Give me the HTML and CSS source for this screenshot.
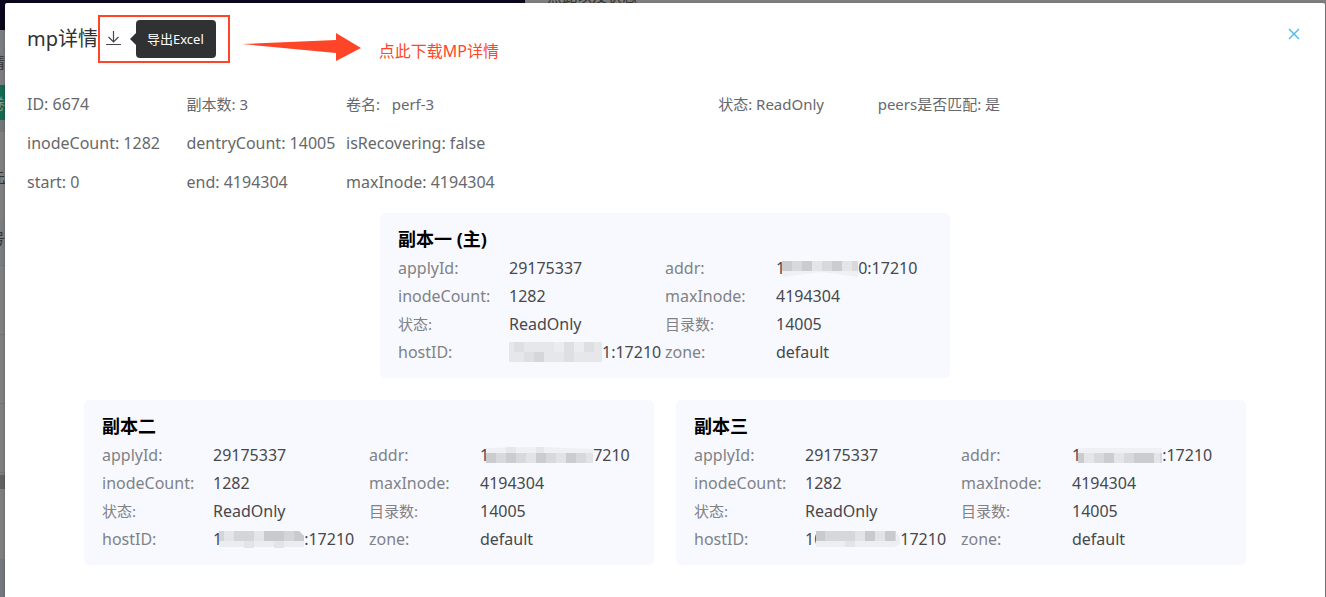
FILE: index.html
```html
<!DOCTYPE html>
<html lang="zh-CN">
<head>
<meta charset="utf-8">
<title>mp详情</title>
<link rel="stylesheet" href="styles.css">
</head>
<body>
<div class="page" aria-hidden="true">
  <div class="topbar"><div class="topbar-dark"></div><span class="topbar-text">点此以及状态</span></div>
  <div class="rail">
    <div class="rail-tab">情</div>
    <div class="rail-active">卷</div>
    <div class="rail-gap"></div>
    <div class="rail-link">先</div>
    <div class="rail-head">号</div>
    <div class="rail-row"></div>
    <div class="rail-row"></div>
    <div class="rail-row"></div>
    <div class="rail-scroll"></div>
    <div class="rail-foot"></div>
  </div>
</div>
<main class="dialog" role="dialog" aria-labelledby="title">
  <header class="head">
    <h1 class="title" id="title">mp详情</h1>
    <div class="export">
      <button class="icon-btn" type="button" aria-label="导出Excel">
        <svg width="16" height="16" viewBox="0 0 16 16" fill="none" stroke="#44474c" stroke-width="1.2"><path d="M7.500 0v11M2.500 6l5 5 5-5M0 13.500h15"/></svg>
      </button>
      <span class="tooltip" role="tooltip">导出Excel</span>
    </div>
    <svg class="arrow" width="120" height="28" viewBox="0 0 120 28"><path d="M1 11L95 7V0l25 15-25 13v-8z" fill="#ff4528"/></svg>
    <span class="note">点此下载MP详情</span>
    <button class="icon-btn close" type="button" aria-label="关闭">
      <svg width="12" height="12" viewBox="0 0 12 12" stroke="#42b8f0" stroke-width="1.300"><path d="M1 1l10 10M11 1L1 11"/></svg>
    </button>
  </header>

  <section class="summary">
    <span>ID: 6674</span>
    <span class="zh">副本数: 3</span>
    <span class="zh wide">卷名: &nbsp; perf-3</span>
    <span class="zh">状态: ReadOnly</span>
    <span class="zh last">peers是否匹配: 是</span>
    <span>inodeCount: 1282</span>
    <span>dentryCount: 14005</span>
    <span class="rest">isRecovering: false</span>
    <span>start: 0</span>
    <span>end: 4194304</span>
    <span class="rest">maxInode: 4194304</span>
  </section>

  <section class="replicas">
    <article class="card">
      <h2 class="card-title">副本一 (主)</h2>
      <dl class="fields">
        <dt>applyId:</dt><dd>29175337</dd>
        <dt>addr:</dt><dd>1<svg class="mask" width="76" height="18"><path fill="#cbccd0" d="M0 2h10v10H0zM20 2h10v10H20zM50 2h10v10H50z"/><path fill="#d8d9dd" d="M10 2h10v10H10zM40 2h10v10H40zM70 2h6v10h-6z"/><path fill="#e4e5e9" d="M30 2h10v10H30zM60 2h10v10H60z"/><path fill="#eff0f4" d="M0 12h76v6L40 13 0 18z"/></svg>0:17210</dd>
        <dt>inodeCount:</dt><dd>1282</dd>
        <dt>maxInode:</dt><dd>4194304</dd>
        <dt class="zh">状态:</dt><dd>ReadOnly</dd>
        <dt class="zh">目录数:</dt><dd>14005</dd>
        <dt>hostID:</dt><dd><svg class="mask flush" width="93" height="20"><path fill="#e6e7ea" d="M0 0h93v20H0z"/><path fill="#dedfe2" d="M5 0h10v10H5zM15 10h10v10H15zM55 0h10v20H55zM75 0h10v10H75z"/><path fill="#d5d6da" d="M25 10h10v10H25z"/><path fill="#ebecef" d="M45 0h10v10H45zM65 0h10v10H65z"/></svg>1:17210</dd>
        <dt>zone:</dt><dd>default</dd>
      </dl>
    </article>
    <div class="pair">
      <article class="card">
        <h2 class="card-title">副本二</h2>
        <dl class="fields">
          <dt>applyId:</dt><dd>29175337</dd>
          <dt>addr:</dt><dd>1<svg class="mask" width="107" height="16"><path fill="#eff0f3" d="M0 1l55-1 52 2v4H0z"/><path fill="#e6e7ea" d="M20 0h10v6H20zM50 0h8v6h-8z"/><path fill="#d8d9dc" d="M0 6h107v10H0z"/><path fill="#cbccd0" d="M0 6h10v10H0zM20 6h10v10H20zM50 6h10v10H50zM80 6h10v10H80z"/><path fill="#e2e3e7" d="M40 6h10v10H40zM70 6h10v10H70zM100 6h7v10h-7z"/></svg>7210</dd>
          <dt>inodeCount:</dt><dd>1282</dd>
          <dt>maxInode:</dt><dd>4194304</dd>
          <dt class="zh">状态:</dt><dd>ReadOnly</dd>
          <dt class="zh">目录数:</dt><dd>14005</dd>
          <dt>hostID:</dt><dd>1<svg class="mask" width="85" height="18"><path fill="#d4d5d9" d="M0 1h80l5 5v5H0z"/><path fill="#e4e5e9" d="M5 1h10v10H5zM35 1h10v10H35z"/><path fill="#c9cace" d="M45 1h20v10H45zM75 1h5l5 5v5H75z"/><path fill="#ebecf0" d="M0 11h85v6H0z"/><path fill="#e3e4e8" d="M25 11h10v7H25zM55 11h10v7H55z"/></svg>:17210</dd>
          <dt>zone:</dt><dd>default</dd>
        </dl>
      </article>
      <article class="card">
        <h2 class="card-title">副本三</h2>
        <dl class="fields">
          <dt>applyId:</dt><dd>29175337</dd>
          <dt>addr:</dt><dd>1<svg class="mask" width="84" height="16"><path fill="#eff0f3" d="M0 1h84v5H0z"/><path fill="#d8d9dc" d="M0 6h84v10H0z"/><path fill="#cbccd0" d="M0 6h6v10H0zM26 6h10v10H26zM56 6h20v10H56z"/><path fill="#e4e5e9" d="M6 6h10v10H6zM36 6h10v10H36zM76 6h6v10h-6z"/></svg>:17210</dd>
          <dt>inodeCount:</dt><dd>1282</dd>
          <dt>maxInode:</dt><dd>4194304</dd>
          <dt class="zh">状态:</dt><dd>ReadOnly</dd>
          <dt class="zh">目录数:</dt><dd>14005</dd>
          <dt>hostID:</dt><dd>10<svg class="mask deep" width="84" height="18"><path fill="#d6d7db" d="M0 1h80v10H0z"/><path fill="#c9cace" d="M0 1h9v10H0zM49 1h10v10H49zM69 1h10v10H69z"/><path fill="#e2e3e6" d="M39 1h10v10H39zM59 1h10v10H59z"/><path fill="#edeef2" d="M0 11h84v3l-6 3H0zM80 3l4 4v5h-4z"/><path fill="#e3e4e8" d="M29 11h10v6H29z"/></svg>17210</dd>
          <dt>zone:</dt><dd>default</dd>
        </dl>
      </article>
    </div>
  </section>
</main>
</body>
</html>
```
FILE: styles.css
```css
* { box-sizing: border-box; }

body {
  margin: 0;
  min-height: 100vh;
  display: grid;
  background: #7f7f7f;
  font: 16px/24px "Noto Sans", "Noto Sans CJK SC", sans-serif;
  color: #66686c;
  overflow: hidden;
}

/* Dimmed page behind the dialog */
.page {
  position: absolute;
  inset: 0;
  overflow: hidden;
  background: #7f7f7f;
  font-size: 15px;
  color: #333;
}

.topbar { display: flex; height: 30px; }
.topbar-dark { flex: 0 0 525px; background: #0d071e; }
.topbar-text { margin: -12px 0 0 22px; line-height: 16px; }

.rail { width: 12px; }
.rail > div { display: flex; align-items: center; justify-content: flex-end; width: 5px; }
.rail .rail-tab { height: 55px; padding-top: 8px; background: #7a7d82; }
.rail .rail-active { height: 35px; background: #14694f; color: #8a9a94; }
.rail .rail-gap { height: 12px; background: #74767a; }
.rail .rail-link { height: 88px; text-decoration: underline; }
.rail .rail-head { height: 46px; padding-bottom: 10px; background: #797c80; border-bottom: 1px solid #727478; }
.rail .rail-row { height: 69px; border-bottom: 1px solid #747474; }
.rail .rail-scroll { height: 14px; margin-top: 2px; background: #626262; }
.rail .rail-foot { height: 38px; margin-top: 70px; background: #74777d; }

.dialog {
  position: relative;
  margin: 3px 1px 0 5px;
  padding: 12px 22px 32px;
  background: #fff;
  border-radius: 2px 2px 0 0;
  box-shadow: 0 1px 3px rgba(0, 0, 0, .3);
}

.head { display: flex; align-items: center; height: 48px; }
.title { margin: 0; font-size: 20px; line-height: 28px; font-weight: 400; color: #303133; }

.export {
  display: flex;
  align-items: center;
  gap: 14px;
  height: 48px;
  padding: 0 12px 0 6px;
  border: 2px solid #ff4528;
}

.icon-btn { display: flex; padding: 0; border: 0; background: none; cursor: pointer; }
.close { margin-left: auto; margin-right: 3px; margin-bottom: 10px; }

.tooltip {
  position: relative;
  padding: 0 12px 0 11px;
  border-radius: 4px;
  background: #303133;
  color: #fff;
  font-size: 13px;
  line-height: 38px;
}
.tooltip::before {
  content: "";
  position: absolute;
  left: -6px;
  top: 13px;
  border: 6px solid transparent;
  border-left: 0;
  border-right-color: #303133;
}

.arrow { margin: 18px 0 0 11px; align-self: flex-start; }
.note { margin: 24px 0 0 18px; color: #ff4528; }

.summary {
  display: grid;
  grid-template-columns: repeat(24, 1fr);
  row-gap: 15px;
  margin-top: 29px;
  white-space: nowrap;
}
.summary > * { grid-column: span 3; }
.summary > .wide { grid-column: span 7; }
.summary > .last { grid-column: span 8; }
.summary > .rest { grid-column: span 18; }
.zh { font-size: 15px; }

.replicas { display: flex; flex-direction: column; align-items: center; gap: 22px; margin-top: 19px; }
.pair { display: flex; justify-content: center; gap: 22px; width: 100%; }

.card {
  width: 570px;
  padding: 13px 18px 12px;
  border-radius: 5px;
  background: #f8f9fe;
}
.card-title { margin: 0 0 2px; font-size: 18px; line-height: 26px; font-weight: 700; color: #000; }

.fields {
  display: grid;
  grid-template-columns: 111px 156px 111px 1fr;
  grid-auto-rows: 28px;
  align-items: center;
  margin: 0;
  white-space: nowrap;
}
.fields dt { color: #808286; }
.fields dd { display: flex; align-items: center; margin: 0; color: #46484c; }

.mask { flex: none; margin-left: -3px; }
.mask.flush { margin-left: 0; }
.mask.deep { margin-left: -7px; }
```
